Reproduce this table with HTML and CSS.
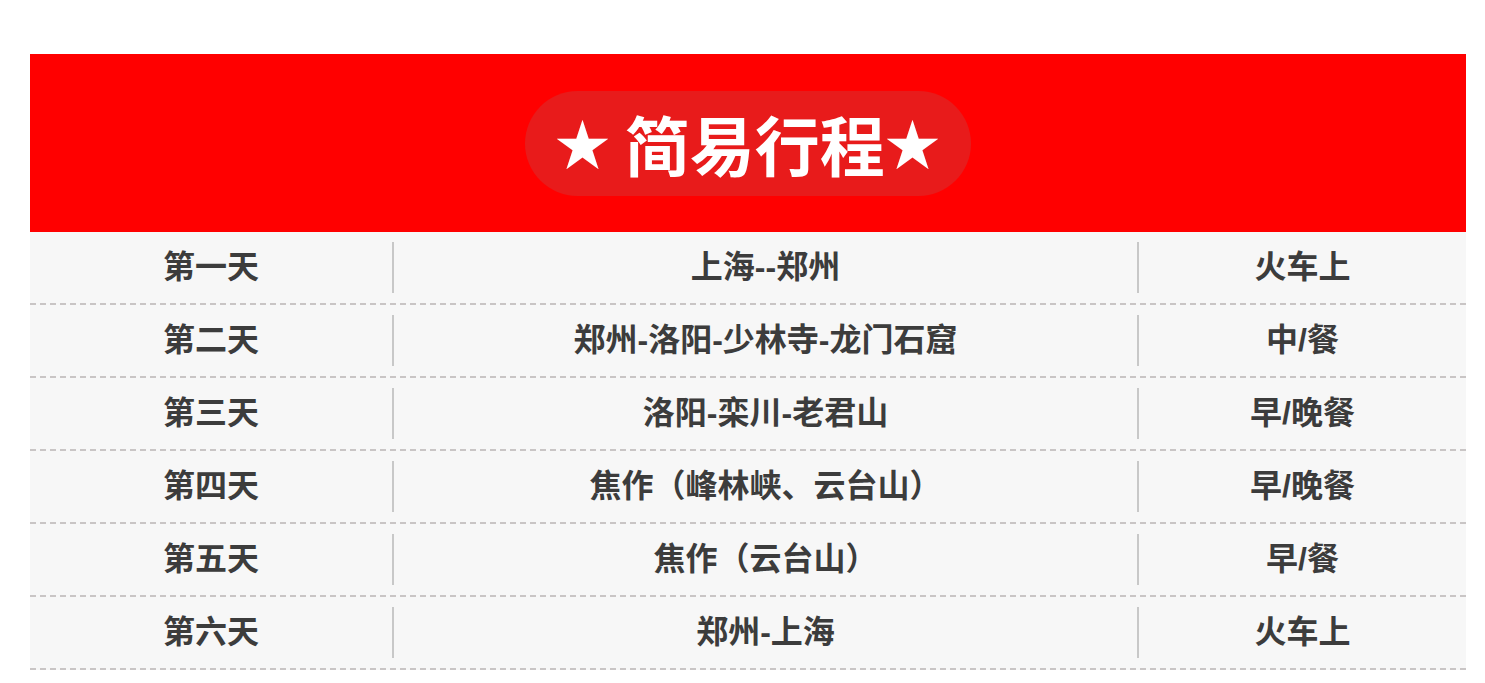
FILE: index.html
```html
<!DOCTYPE html>
<html lang="zh-CN">
<head>
<meta charset="utf-8">
<title>简易行程</title>
<link rel="stylesheet" href="styles.css">
</head>
<body>
<div class="wrap">
  <div class="banner">
    <div class="pill"><span class="star">★</span> 简易行程<span class="star">★</span></div>
  </div>
  <div class="table">
    <div class="row"><div class="c c1">第一天</div><div class="c c2">上海--郑州</div><div class="c c3">火车上</div></div>
    <div class="row"><div class="c c1">第二天</div><div class="c c2">郑州-洛阳-少林寺-龙门石窟</div><div class="c c3">中/餐</div></div>
    <div class="row"><div class="c c1">第三天</div><div class="c c2">洛阳-栾川-老君山</div><div class="c c3">早/晚餐</div></div>
    <div class="row"><div class="c c1">第四天</div><div class="c c2">焦作（峰林峡、云台山）</div><div class="c c3">早/晚餐</div></div>
    <div class="row"><div class="c c1">第五天</div><div class="c c2">焦作（云台山）</div><div class="c c3">早/餐</div></div>
    <div class="row"><div class="c c1">第六天</div><div class="c c2">郑州-上海</div><div class="c c3">火车上</div></div>
  </div>
</div>
</body>
</html>
```
FILE: styles.css
```css
* { box-sizing: border-box; }
html, body { margin: 0; padding: 0; background: #fff; }
body {
  font-family: "Liberation Sans", "Noto Sans CJK SC", sans-serif;
}
.wrap {
  margin: 54px 19px 0 30px;
  width: 1436px;
}
.banner {
  background: #ff0000;
  height: 178px;
  display: flex;
  align-items: center;
  justify-content: center;
}
.pill {
  font-family: "Noto Sans CJK SC", sans-serif;
  background: #e81b1b;
  color: #fff;
  font-weight: 700;
  font-size: 65px;
  line-height: 105px;
  height: 105px;
  padding: 0 31px 0 30px;
  border-radius: 53px;
  white-space: nowrap;
  margin-top: 1px;
}
.star {
  font-size: 55px;
  vertical-align: top;
  line-height: 101px;
}
.table { background: #f7f7f7; }
.row {
  display: grid;
  grid-template-columns: 362px 745px 329px;
  height: 73px;
  align-items: center;
  padding-bottom: 2px;
  background-image: repeating-linear-gradient(to right, #c9c5c5 0, #c9c5c5 6px, transparent 6px, transparent 10px);
  background-size: 100% 2px;
  background-repeat: no-repeat;
  background-position: 0 100%;
}
.c {
  text-align: center;
  font-size: 32px;
  font-weight: 700;
  color: #3c3c3c;
  height: 51px;
  line-height: 50px;
}
.c2, .c3 { border-left: 2px solid #c8c8c8; }
```
